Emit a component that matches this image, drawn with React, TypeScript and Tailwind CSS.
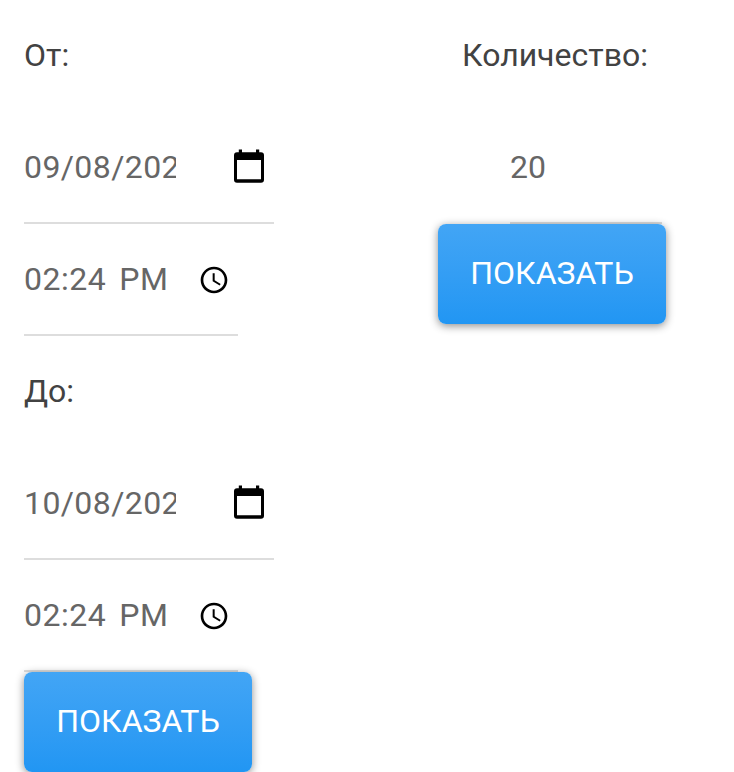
function CalendarIcon() {
  return (
    <svg className="block shrink-0" width="32" height="36" viewBox="0 0 32 36">
      <path fillRule="evenodd" d="M5.8 .5h3.2v2.7h14V.5h3.2v2.7H28a3 3 0 0 1 3 3v24.5a3 3 0 0 1-3 3H4a3 3 0 0 1-3-3V6.2a3 3 0 0 1 3-3h1.8zM4 11v19.2h24V11z" fill="#000" />
    </svg>
  );
}
function ClockIcon() {
  return (
    <svg className="mt-0.5 block shrink-0" width="32" height="32" viewBox="0 0 24 24">
      <path d="M11.99 2C6.47 2 2 6.48 2 12s4.47 10 9.99 10C17.52 22 22 17.52 22 12S17.52 2 11.99 2zM12 20c-4.42 0-8-3.58-8-8s3.58-8 8-8 8 3.58 8 8-3.58 8-8 8zm.5-13H11v6l5.25 3.15.75-1.23-4.5-2.67z" fill="#000" />
    </svg>
  );
}
function Button() {
  return (
    <button className="block h-[100px] w-[228px] rounded-lg bg-linear-to-b from-[#42a5f5] to-[#2196f3] pb-0.5 text-[32px] leading-[48px] text-white shadow-[0_2px_8px_rgba(0,0,0,0.45)]">
      ПОКАЗАТЬ
    </button>
  );
}
function Period({ label, date }: { label: string; date: string }) {
  return (
    <div>
      <div className="h-28 leading-[110px] text-[#424242]">{label}</div>
      <div className="flex h-28 w-[250px] items-center justify-between border-b-2 border-[#dddddd] pr-[9px] text-[#666666]">
        <span className="w-[152px] overflow-hidden whitespace-nowrap tracking-[0.4px]">{date}</span>
        <CalendarIcon />
      </div>
      <div className="flex h-28 w-[214px] items-center justify-between border-b-2 border-[#dddddd] pr-2 text-[#666666]">
        <span className="flex gap-[13px] whitespace-nowrap tracking-[0.5px]"><span>02:24</span><span>PM</span></span>
        <ClockIcon />
      </div>
    </div>
  );
}
export default function App() {
  return (
    <main className="flex h-[772px] w-[734px] overflow-hidden bg-white pl-6 font-[Roboto,sans-serif] text-[32px]">
      <div className="w-[414px]">
        <Period label="От:" date="09/08/2021" />
        <Period label="До:" date="10/08/2021" />
        <Button />
      </div>
      <div>
        <div className="h-28 pl-6 leading-[110px] text-[#424242]">Количество:</div>
        <div className="ml-[72px] flex h-28 w-[152px] items-center border-b-2 border-[#dddddd] text-[#666666]">20</div>
        <Button />
      </div>
    </main>
  );
}
